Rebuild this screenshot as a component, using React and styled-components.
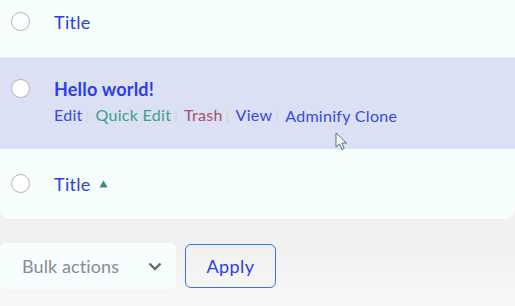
import styled, { createGlobalStyle } from "styled-components";

const Global = createGlobalStyle`
  body {
    margin: 0;
    background: #f4f4f4;
    font-family: Lato, "Noto Sans", sans-serif;
  }
`;

const Page = styled.div`
  width: 515px;
  height: 306px;
  overflow: hidden;
  background: linear-gradient(#f1f1f1 0%, #f1f1f1 82%, #f8f8f8 100%);
`;

const Panel = styled.div`
  position: relative;
  background: #f6fffd;
  border-radius: 0 0 10px 10px;
`;

const Row = styled.div`
  display: grid;
  grid-template-columns: 54px 1fr;
  align-items: start;
  align-content: start;
  height: ${(p) => p.$h}px;
  padding-top: ${(p) => p.$top}px;
  box-sizing: border-box;
  background: ${(p) => (p.$active ? "#dce0f4" : "transparent")};
  border-bottom: ${(p) => (p.$line ? "1px solid #e6ecef" : "none")};
`;

const Radio = styled.span`
  display: block;
  width: 17px;
  height: 17px;
  margin: ${(p) => p.$mt || 0}px 0 0 11px;
  border: 1.5px solid #b3b3b3;
  border-radius: 50%;
  background: #fff;
`;

const Title = styled.div`
  display: flex;
  align-items: center;
  gap: 8px;
  color: #2a3cf5;
  font-size: 18px;
  font-weight: ${(p) => (p.$bold ? 700 : 400)};
  line-height: 22px;
  letter-spacing: ${(p) => (p.$bold ? "0.2px" : "0.3px")};
`;

const Actions = styled.div`
  display: flex;
  align-items: center;
  margin-top: 5px;
  font-size: 16px;
  line-height: 20px;
  letter-spacing: 0.3px;
`;

const Action = styled.span`
  color: ${(p) => p.$c || "#3548f0"};
  &:not(:last-child)::after {
    content: "|";
    color: #d0d4dc;
    margin: 0 6px 0 3px;
    font-size: 14px;
  }
`;

const Cursor = styled.svg`
  position: absolute;
  left: 335px;
  top: 132px;
`;

const Footer = styled.div`
  display: flex;
  align-items: center;
  gap: 9px;
  margin-top: 24px;
`;

const Select = styled.div`
  display: flex;
  align-items: center;
  justify-content: space-between;
  width: 176px;
  height: 46px;
  box-sizing: border-box;
  padding: 0 14px 0 22px;
  background: #f6fffd;
  border-radius: 6px;
  color: #8a8a96;
  font-size: 18px;
  letter-spacing: 0.1px;
`;

const Apply = styled.button`
  width: 91px;
  height: 44px;
  border: 1.5px solid #3a6ff0;
  border-radius: 6px;
  background: transparent;
  color: #2a3cf5;
  font-family: inherit;
  font-size: 18px;
  letter-spacing: 0.4px;
`;

export default function App() {
  return (
    <Page>
      <Global />
      <Panel>
        <Row $h={58} $top={11} $line>
          <Radio $mt={1} />
          <Title>Title</Title>
        </Row>
        <Row $h={91} $top={20} $active>
          <Radio $mt={1} />
          <div>
            <Title $bold>Hello world!</Title>
            <Actions>
              <Action>Edit</Action>
              <Action $c="#3aa087">Quick Edit</Action>
              <Action $c="#a5506f">Trash</Action>
              <Action>View</Action>
              <Action>Adminify Clone</Action>
            </Actions>
          </div>
        </Row>
        <Row $h={70} $top={24}>
          <Radio $mt={1} />
          <Title>
            Title
            <svg width="9" height="8" viewBox="0 0 9 8">
              <path d="M4.5 0.5 L8.5 7.5 L0.5 7.5 Z" fill="#3a8a78" />
            </svg>
          </Title>
        </Row>
        <Cursor width="14" height="20" viewBox="0 0 14 20">
          <path
            d="M1 1 L1 15 L4.5 11.8 L7 17.5 L9.2 16.5 L6.8 11 L11.5 11 Z"
            fill="#fff"
            stroke="#3a7a6c"
            strokeWidth="1"
            strokeLinejoin="round"
          />
        </Cursor>
      </Panel>
      <Footer>
        <Select>
          Bulk actions
          <svg width="14" height="9" viewBox="0 0 14 9">
            <path d="M1.5 1.5 L7 7 L12.5 1.5" fill="none" stroke="#5f6d6b" strokeWidth="2.4" />
          </svg>
        </Select>
        <Apply>Apply</Apply>
      </Footer>
    </Page>
  );
}
